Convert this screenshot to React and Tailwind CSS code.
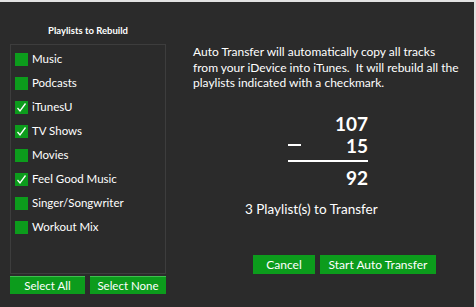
const playlists = [
  { name: "Music", checked: false },
  { name: "Podcasts", checked: false },
  { name: "iTunesU", checked: true },
  { name: "TV Shows", checked: true },
  { name: "Movies", checked: false },
  { name: "Feel Good Music", checked: true },
  { name: "Singer/Songwriter", checked: false },
  { name: "Workout Mix", checked: false },
];

const CheckBox = ({ checked }) => (
  <div className="w-[13px] h-[13px] bg-[#0c9c1c] flex items-center justify-center">
    {checked && (
      <svg width="11" height="11" viewBox="0 0 11 11">
        <path d="M1.5 6 L4 9 L9.5 1.5" stroke="#fff" strokeWidth="1.3" fill="none" />
      </svg>
    )}
  </div>
);

const App = () => {
  return (
    <div
      className="w-[476px] h-[307px] bg-[#2b2b2b] border-t-2 border-r-2 border-[#e2e2e2] flex text-white"
      style={{ fontFamily: 'Lato, "Noto Sans", sans-serif' }}
    >
      <div className="w-[170px] pl-[10px] pt-[21px] flex flex-col">
        <div className="w-[156px] text-center text-[9.5px] font-bold h-[16px] leading-[16px]">
          Playlists to Rebuild
        </div>
        <div className="mt-[5px] w-[156px] h-[230px] border border-[#3d3d3d] pt-[2px] pl-[4px] flex flex-col">
          {playlists.map((p) => (
            <div key={p.name} className="h-[24px] flex items-center gap-[4px] text-[11.5px]">
              <CheckBox checked={p.checked} />
              <span>{p.name}</span>
            </div>
          ))}
        </div>
        <div className="mt-[2px] flex gap-[5px]">
          <button className="w-[75px] h-[18px] bg-[#0c9c1c] border-t border-[#3fbf4f] text-[11.5px] leading-[16px]">
            Select All
          </button>
          <button className="w-[76px] h-[18px] bg-[#0c9c1c] border-t border-[#3fbf4f] text-[11.5px] leading-[16px]">
            Select None
          </button>
        </div>
      </div>
      <div className="flex-1 pl-[23px] pt-[42px] flex flex-col">
        <p className="text-[12px] leading-[15.5px] w-[270px]">
          Auto Transfer will automatically copy all tracks from your iDevice into iTunes.&nbsp; It will rebuild all the playlists indicated with a checkmark.
        </p>
        <div className="ml-[95px] mt-[23px] w-[80px] flex flex-col items-end font-bold text-[19px] leading-[19px]">
          <div>107</div>
          <div className="w-full flex justify-between items-center mt-[3px]">
            <div className="w-[13px] h-[2px] bg-white" />
            <div>15</div>
          </div>
          <div className="w-full h-[2px] bg-white mt-[5px]" />
          <div className="mt-[6px]">92</div>
        </div>
        <div className="ml-[52px] mt-[14px] text-[13.5px] leading-[16px]">3 Playlist(s) to Transfer</div>
        <div className="ml-[60px] mt-[38px] flex gap-[5px]">
          <button className="w-[62px] h-[19px] bg-[#0c9c1c] text-[12px] leading-[19px]">Cancel</button>
          <button className="w-[116px] h-[19px] bg-[#0c9c1c] text-[12px] leading-[19px]">Start Auto Transfer</button>
        </div>
      </div>
    </div>
  );
};

export default App;
